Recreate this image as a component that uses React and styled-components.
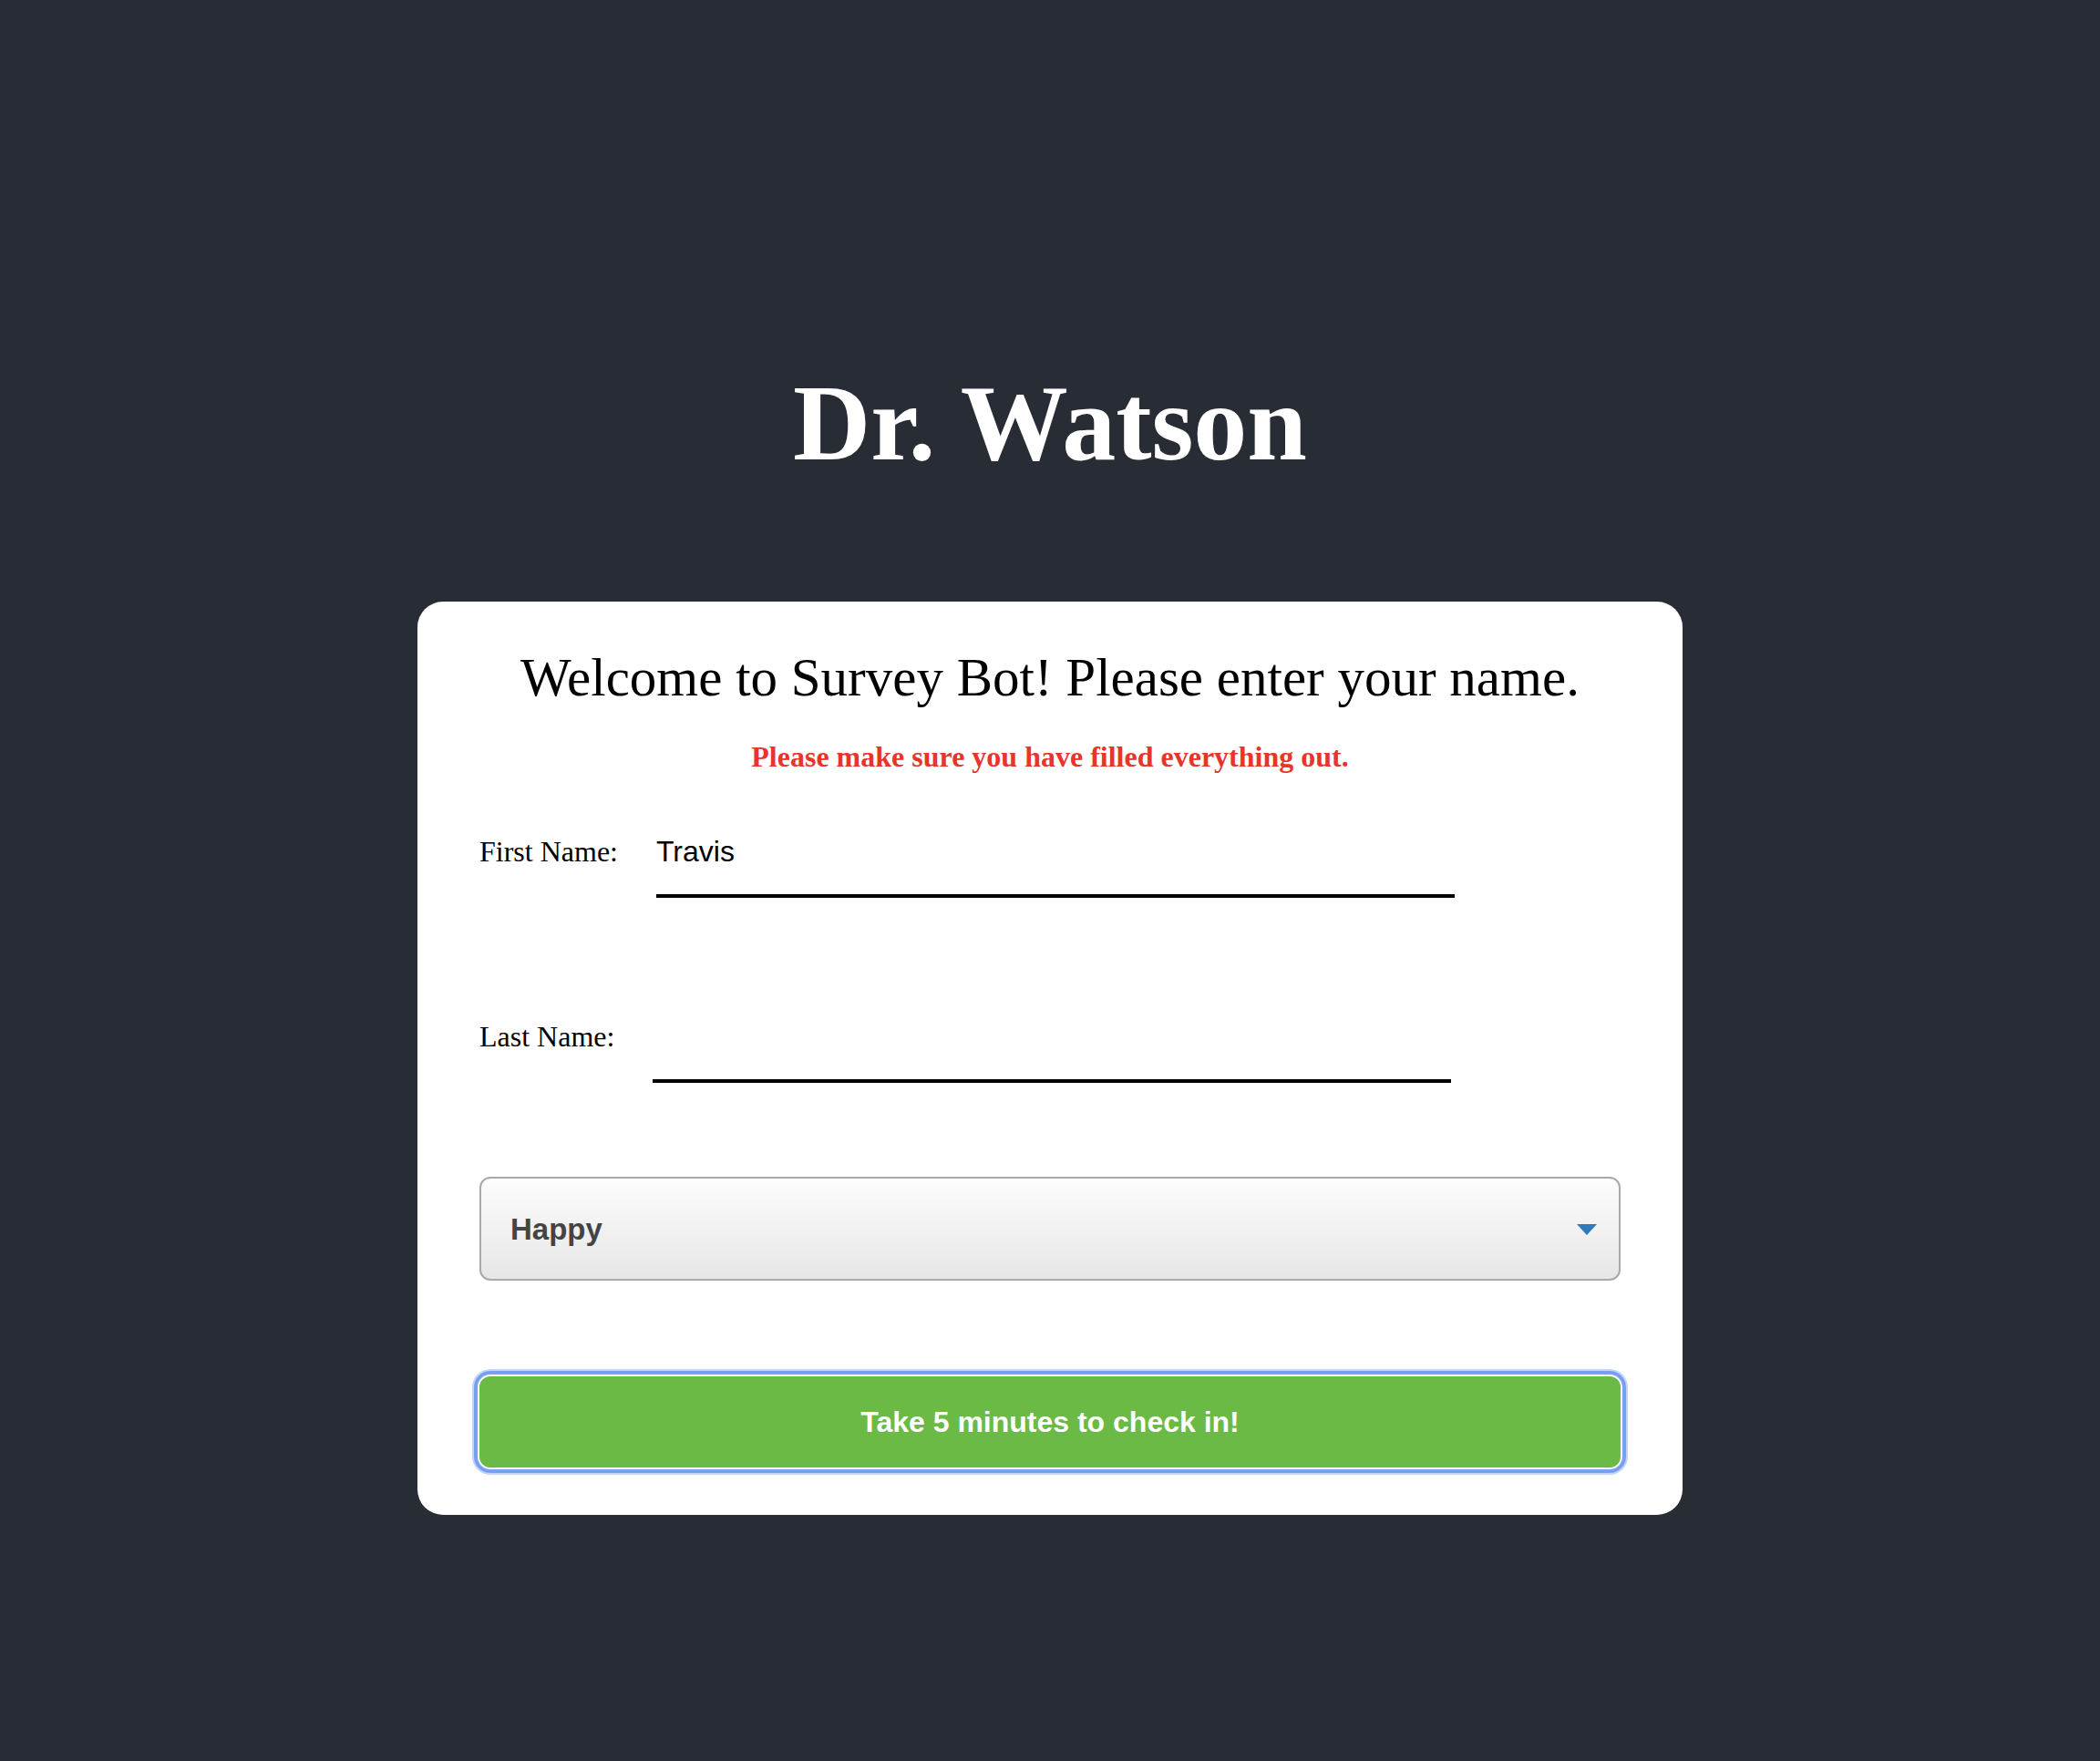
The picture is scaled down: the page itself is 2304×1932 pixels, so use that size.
import React, { useState } from "react";
import styled, { createGlobalStyle } from "styled-components";

const GlobalStyle = createGlobalStyle`
  html, body {
    margin: 0;
    padding: 0;
    background-color: #282c34;
  }
  body {
    min-height: 1932px;
    font-family: "Liberation Serif", "Times New Roman", serif;
  }
`;

const Page = styled.div`
  min-height: 1932px;
  padding-top: 406px;
  box-sizing: border-box;
  display: flex;
  flex-direction: column;
  align-items: center;
`;

const Title = styled.h1`
  margin: 0 0 136px;
  font-family: "Liberation Serif", "Times New Roman", serif;
  font-size: 118px;
  line-height: 1;
  font-weight: 700;
  color: #fff;
`;

const Card = styled.div`
  width: 1388px;
  box-sizing: border-box;
  padding: 54px 68px 52px;
  background: #fff;
  border-radius: 28px;
`;

const Heading = styled.h2`
  margin: 0;
  text-align: center;
  font-family: "Liberation Serif", "Times New Roman", serif;
  font-size: 59px;
  line-height: 1;
  font-weight: 400;
  color: #000;
`;

const ErrorText = styled.p`
  margin: 41px 0 0;
  text-align: center;
  font-family: "Liberation Serif", "Times New Roman", serif;
  font-size: 32px;
  line-height: 1;
  font-weight: 700;
  color: #e8352b;
`;

const Row = styled.div`
  display: flex;
  align-items: baseline;
  margin-top: ${props => props.gap}px;
`;

const Label = styled.label`
  font-family: "Liberation Serif", "Times New Roman", serif;
  font-size: 32px;
  line-height: 1;
  color: #000;
  margin-right: 42px;
`;

const TextInput = styled.input`
  width: 876px;
  padding: 0 0 28px;
  margin: 0;
  border: none;
  border-bottom: 4px solid #000;
  outline: none;
  background: transparent;
  font-family: "Liberation Sans", Arial, sans-serif;
  font-size: 32px;
  line-height: 1;
  color: #000;
`;

const SelectWrap = styled.div`
  position: relative;
  margin-top: 103px;
`;

const Select = styled.select`
  appearance: none;
  display: block;
  width: 100%;
  height: 114px;
  box-sizing: border-box;
  padding: 0 32px;
  border: 2px solid #a9a9a9;
  border-radius: 12px;
  background: linear-gradient(#fdfdfd, #e6e6e6);
  font-family: "Liberation Sans", Arial, sans-serif;
  font-size: 33px;
  font-weight: 700;
  color: #444;
  outline: none;
`;

const Arrow = styled.svg`
  position: absolute;
  right: 26px;
  top: 52px;
  pointer-events: none;
`;

const Button = styled.button`
  display: block;
  width: 100%;
  height: 100px;
  margin-top: 105px;
  border: none;
  border-radius: 12px;
  background: #6aba45;
  color: #fff;
  font-family: "Liberation Sans", Arial, sans-serif;
  font-size: 32px;
  font-weight: 700;
  cursor: pointer;
  box-shadow: 0 0 0 2px #fff, 0 0 0 6px #78a0f2, 0 0 0 8px #c5d5f7;
`;

export default function App() {
  const [first, setFirst] = useState("Travis");
  const [last, setLast] = useState("");
  const [mood, setMood] = useState("Happy");

  return (
    <>
      <GlobalStyle />
      <Page>
        <Title>Dr. Watson</Title>
        <Card>
          <Heading>Welcome to Survey Bot! Please enter your name.</Heading>
          <ErrorText>Please make sure you have filled everything out.</ErrorText>
          <Row gap={70}>
            <Label>First Name:</Label>
            <TextInput value={first} onChange={e => setFirst(e.target.value)} />
          </Row>
          <Row gap={134}>
            <Label>Last Name:</Label>
            <TextInput value={last} onChange={e => setLast(e.target.value)} />
          </Row>
          <SelectWrap>
            <Select value={mood} onChange={e => setMood(e.target.value)}>
              <option>Happy</option>
              <option>Sad</option>
              <option>Stressed</option>
              <option>Tired</option>
            </Select>
            <Arrow width="22" height="12" viewBox="0 0 22 12">
              <path d="M0 0 H22 L11 12 Z" fill="#2f7ab8" />
            </Arrow>
          </SelectWrap>
          <Button>Take 5 minutes to check in!</Button>
        </Card>
      </Page>
    </>
  );
}
